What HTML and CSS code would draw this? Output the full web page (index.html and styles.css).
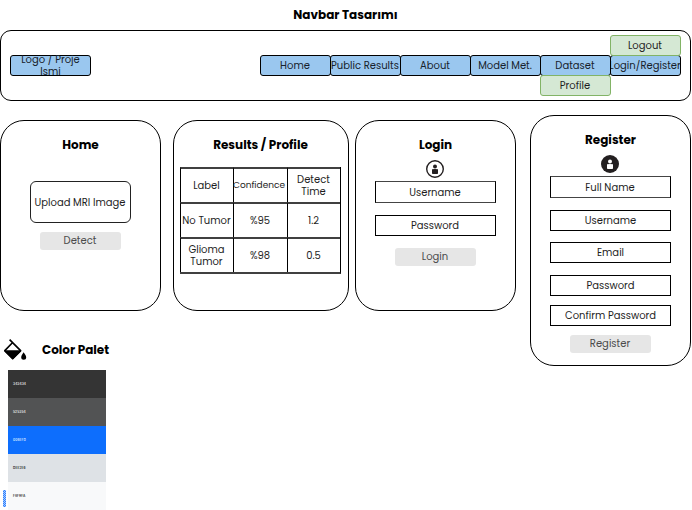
FILE: index.html
```html
<!DOCTYPE html>
<html lang="tr">
<head>
<meta charset="utf-8">
<title>Navbar Tasarımı</title>
<link rel="stylesheet" href="styles.css">
</head>
<body>
<h1 class="page-title">Navbar Tasarımı</h1>
<nav class="navbar">
  <div class="nav-box logo"><span>Logo / Proje<br>Ismi</span></div>
  <div class="links">
    <div class="nav-box">Home</div>
    <div class="nav-box">Public Results</div>
    <div class="nav-box">About</div>
    <div class="nav-box">Model Met.</div>
    <div class="nav-box">Dataset<div class="sub below">Profile</div></div>
    <div class="nav-box"><span class="clip">Login/Register</span><div class="sub above">Logout</div></div>
  </div>
</nav>
<main class="cards">
  <section class="card home">
    <h2>Home</h2>
    <div class="upload">Upload MRI Image</div>
    <button class="btn">Detect</button>
  </section>
  <section class="card results">
    <h2>Results / Profile</h2>
    <div class="table">
      <div>Label</div><div class="small">Confidence</div><div>Detect<br>Time</div>
      <div>No Tumor</div><div>%95</div><div>1.2</div>
      <div>Glioma<br>Tumor</div><div>%98</div><div>0.5</div>
    </div>
  </section>
  <section class="card login">
    <h2>Login</h2>
    <svg class="user" viewBox="0 0 18 18"><circle cx="9" cy="9" r="8.3" fill="#fff" stroke="#231f20" stroke-width="1.4"/><circle cx="9" cy="6.6" r="2" fill="#231f20"/><path d="M6 9.2Q9 8.6 12 9.2V13.2Q12 14 11.2 14H6.8Q6 14 6 13.2Z" fill="#231f20"/></svg>
    <div class="field soft">Username</div>
    <div class="field gap12">Password</div>
    <button class="btn">Login</button>
  </section>
  <section class="card register">
    <h2>Register</h2>
    <svg class="user" viewBox="0 0 18 18"><circle cx="9" cy="9" r="9" fill="#231f20"/><circle cx="9" cy="6.6" r="2" fill="#fff"/><path d="M6 9.2Q9 8.6 12 9.2V13.2Q12 14 11.2 14H6.8Q6 14 6 13.2Z" fill="#fff"/></svg>
    <div class="field soft">Full Name</div>
    <div class="field gap12">Username</div>
    <div class="field gap11">Email</div>
    <div class="field gap12">Password</div>
    <div class="field gap9">Confirm Password</div>
    <button class="btn">Register</button>
  </section>
</main>
<section class="palette">
  <div class="palette-head">
    <svg class="bucket" viewBox="0 0 24 24"><path d="M6.6 1.6 17.6 12.6 9.7 20.4 1.8 12.6 9.4 4.8" fill="none" stroke="#000" stroke-width="1.6" stroke-linejoin="round"/><path d="M2 13H17.5L9.7 20.8Z" fill="#000" stroke="#000" stroke-width="1.5" stroke-linejoin="round"/><path d="M20.6 14.2C21.6 16 23.2 17.6 23.2 19.3a2.5 2.5 0 0 1-5 0c0-1.7 1.4-3.3 2.4-5.1Z"/></svg>
    <h2>Color Palet</h2>
  </div>
  <div class="palette-body">
    <div class="side"></div>
    <div class="swatches">
      <div class="swatch s1">343434</div>
      <div class="swatch s2">525354</div>
      <div class="swatch s3">006EFD</div>
      <div class="swatch s4">DEE2E6</div>
      <div class="swatch s5">F8F9FA</div>
    </div>
  </div>
</section>
</body>
</html>
```
FILE: styles.css
```css
* { box-sizing: border-box; }
body {
  margin: 0;
  width: 692px;
  height: 510px;
  overflow: hidden;
  background: #fff;
  color: #1e1e1e;
  font: 10px/12px Poppins, Inter, sans-serif;
}
h1, h2 {
  margin: 0;
  color: #000;
  font-size: 12px;
  line-height: 18px;
  font-weight: 700;
  text-align: center;
}
.page-title { height: 30px; padding: 6px 1px 0 0; }
.navbar {
  display: flex;
  justify-content: space-between;
  align-items: center;
  width: 691px;
  height: 71px;
  padding: 0 9px;
  border: 1px solid #000;
  border-radius: 11px;
}
.links { display: flex; }
.nav-box {
  position: relative;
  display: flex;
  align-items: center;
  justify-content: center;
  width: 71px;
  height: 21px;
  padding-right: 1px;
  border: 1px solid #000;
  border-radius: 3px;
  background: #9ac7ef;
  color: #17222c;
  white-space: nowrap;
}
.links .nav-box + .nav-box { margin-left: -1px; }
.logo { width: 81px; padding-right: 0; overflow: clip; overflow-clip-margin: 1px; text-align: center; }
.clip { display: flex; justify-content: center; flex: none; width: 69px; overflow: hidden; }
.sub {
  position: absolute;
  left: -1px;
  width: 71px;
  height: 21px;
  padding-right: 1px;
  border: 1px solid #82b366;
  border-radius: 3px;
  background: #d5e8d4;
  line-height: 19px;
  text-align: center;
  color: #1e1e1e;
}
.above { top: -21px; }
.below { top: 19px; }
.cards { display: flex; align-items: flex-start; height: 238px; padding-top: 14px; }
.card {
  display: flex;
  flex-direction: column;
  align-items: center;
  width: 161px;
  height: 191px;
  margin-top: 5px;
  padding-top: 15px;
  border: 1px solid #000;
  border-radius: 24px;
}
.results { width: 176px; margin-left: 11.5px; padding-right: 1px; }
.results h2 { padding-left: 1px; }
.login { margin-left: 6.5px; }
.register { height: 251px; margin: 0 0 0 14px; }
.upload {
  display: flex;
  align-items: center;
  justify-content: center;
  width: 101px;
  height: 42px;
  margin-top: 27px;
  padding: 1px 1px 0 0;
  border: 1px solid #222;
  border-radius: 6px;
}
.btn {
  width: 81px;
  height: 18px;
  margin-top: 9px;
  padding: 0 1px 0 0;
  border: 0;
  border-radius: 3px;
  background: #e6e6e6;
  color: #4b4b4b;
  font: inherit;
}
.login .btn { margin-top: 12px; }
.register .btn { margin-top: 9px; }
.table {
  display: grid;
  grid-template-columns: 53px 54px 53px;
  grid-template-rows: repeat(3, 35px);
  width: 161px;
  height: 107px;
  margin-top: 13px;
  border-bottom: 2px solid #404040;
  border-right: 1px solid #000;
}
.table div {
  display: flex;
  align-items: center;
  justify-content: center;
  border-top: 2px solid #404040;
  border-left: 1px solid #000;
  text-align: center;
  white-space: nowrap;
}
.table .small { padding: 0 2px 2px 0; font-size: 9px; }
.user { width: 18px; height: 18px; margin: 6px 1px 0 0; }
.register .user { margin-right: 2px; }
.field {
  display: flex;
  align-items: center;
  justify-content: center;
  width: 121px;
  height: 21px;
  border: 1px solid #000;
}
.login .field, .register .soft { padding-right: 1px; }
.soft { height: 22px; margin-top: 3px; padding-top: 1px; border-top-color: #444; border-bottom-color: #444; }
.gap12 { margin-top: 12px; }
.gap11 { margin-top: 11px; }
.gap9 { margin-top: 9px; }
.palette-head { display: flex; align-items: center; height: 31px; padding: 0 0 9px 3px; }
.bucket { width: 24px; height: 24px; }
.palette-head h2 { margin-left: 15px; }
.palette-body { display: flex; }
.side {
  width: 3px;
  height: 17px;
  margin: 120px 2px 0 3px;
  background: repeating-conic-gradient(#2d7fff 0 25%, #a4caff 0 50%) 0 0 / 2px 2px;
}
.swatches { width: 98px; }
.swatch {
  height: 28px;
  padding-left: 5px;
  font: 600 3.2px/28px Inter, sans-serif;
  letter-spacing: 0.1px;
}
.s1 { background: #343434; color: #eee; }
.s2 { background: #525354; color: #eee; }
.s3 { background: #0d6efd; color: #d6e7ff; }
.s4 { background: #dee2e6; color: #222; }
.s5 { background: #f8f9fa; color: #222; }
```
